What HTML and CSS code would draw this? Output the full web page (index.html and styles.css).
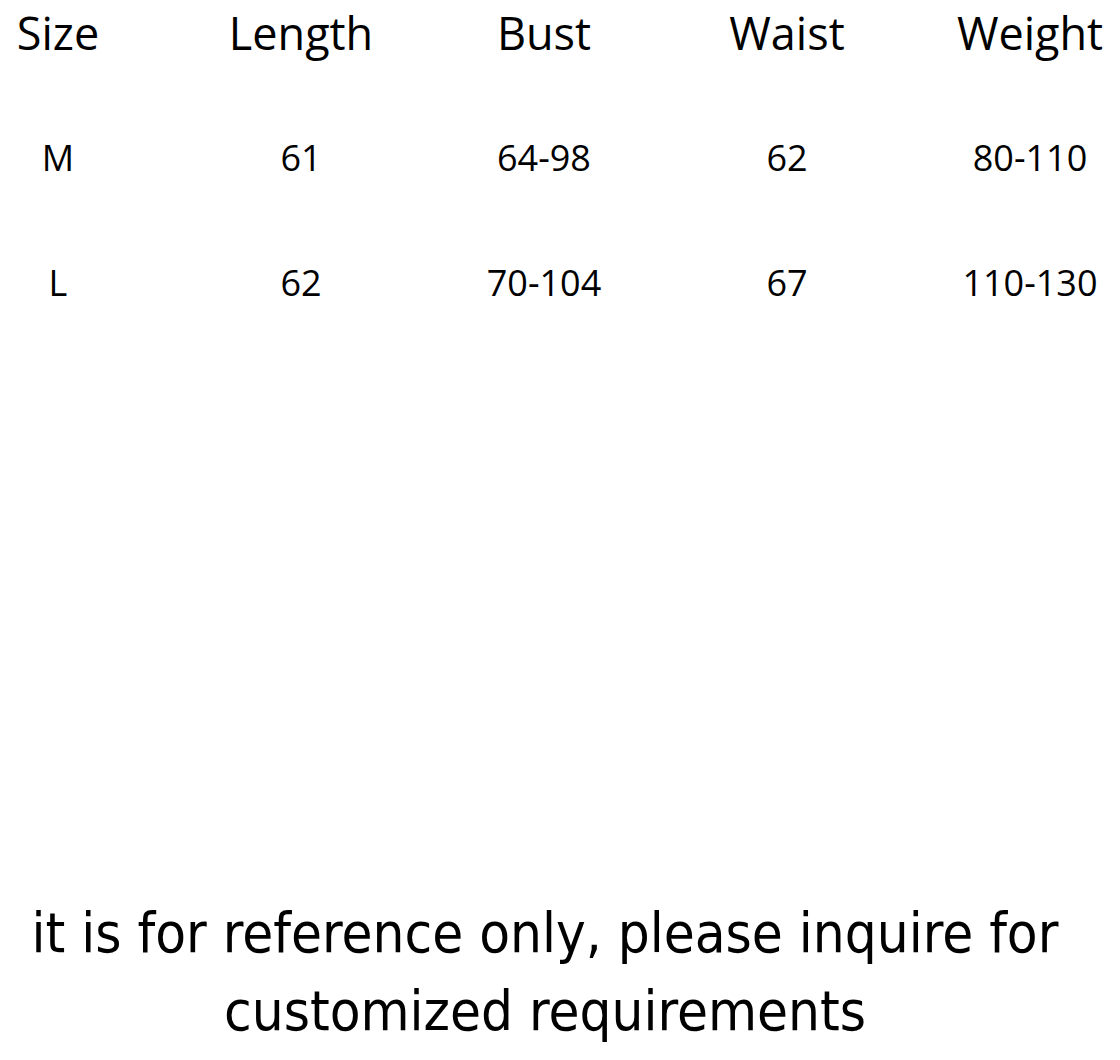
FILE: index.html
```html
<!DOCTYPE html>
<html>
<head>
<meta charset="utf-8">
<link rel="stylesheet" href="styles.css">
</head>
<body>
<div class="chart">
  <div class="row head">
    <div class="cell">Size</div>
    <div class="cell">Length</div>
    <div class="cell">Bust</div>
    <div class="cell">Waist</div>
    <div class="cell">Weight</div>
  </div>
  <div class="row data">
    <div class="cell">M</div>
    <div class="cell">61</div>
    <div class="cell">64-98</div>
    <div class="cell">62</div>
    <div class="cell">80-110</div>
  </div>
  <div class="row data">
    <div class="cell">L</div>
    <div class="cell">62</div>
    <div class="cell">70-104</div>
    <div class="cell">67</div>
    <div class="cell">110-130</div>
  </div>
</div>
<p class="note">it is for reference only, please inquire for<br>customized requirements</p>
</body>
</html>
```
FILE: styles.css
```css
html, body {
  margin: 0;
  padding: 0;
  background: #fff;
  color: #000;
}
body {
  width: 1120px;
  height: 1060px;
  overflow: hidden;
}
.chart {
  padding-top: 2px;
  display: flex;
  flex-direction: column;
  gap: 63px;
  font-family: "Open Sans", "DejaVu Sans", sans-serif;
}
.row {
  display: grid;
  grid-template-columns: repeat(5, 116px);
  column-gap: 127px;
  justify-items: center;
  height: 62px;
  line-height: 62px;
}
.cell {
  white-space: nowrap;
}
.head {
  font-size: 45px;
}
.data {
  font-size: 36px;
}
.note {
  margin: 580px 0 0;
  font-family: "DejaVu Sans Condensed", "DejaVu Sans", sans-serif;
  font-stretch: condensed;
  font-size: 56px;
  line-height: 78px;
  text-align: center;
  padding-right: 30px;
}
```
